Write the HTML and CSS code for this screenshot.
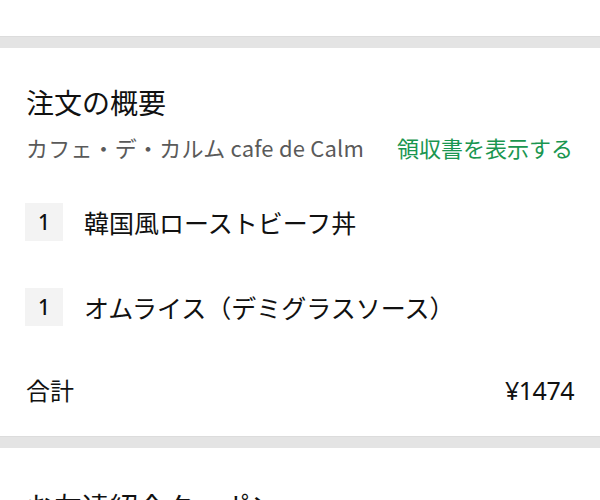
FILE: index.html
```html
<!DOCTYPE html>
<html lang="ja">
<head>
<meta charset="utf-8">
<link rel="stylesheet" href="styles.css">
</head>
<body>
<div class="top"></div>
<div class="sep"></div>
<section class="card">
  <h2 class="title">注文の概要</h2>
  <div class="sub">
    <span class="shop">カフェ・デ・カルム cafe de Calm</span>
    <a class="receipt">領収書を表示する</a>
  </div>
  <ul class="items">
    <li class="item"><span class="qty">1</span><span class="name">韓国風ローストビーフ丼</span></li>
    <li class="item"><span class="qty">1</span><span class="name">オムライス（デミグラスソース）</span></li>
  </ul>
  <div class="total">
    <span>合計</span>
    <span class="amount">¥1474</span>
  </div>
</section>
<div class="sep"></div>
<section class="card next">
  <h2 class="title">お友達紹介クーポン</h2>
</section>
</body>
</html>
```
FILE: styles.css
```css
html, body {
  margin: 0;
  padding: 0;
  background: #fff;
  font-family: "Noto Sans CJK JP", "Noto Sans", sans-serif;
  color: #111;
  overflow: hidden;
}
.top {
  height: 36px;
  background: #fff;
}
.sep {
  height: 12px;
  background: #e4e4e4;
  border-top: 1px solid #dcdcdc;
  box-sizing: border-box;
}
.card {
  padding: 36px 26px 31px 26px;
  background: #fff;
}
.title {
  margin: 0;
  font-size: 28px;
  font-weight: 400;
  line-height: 36px;
  color: #111;
}
.sub {
  margin-top: 12px;
  display: flex;
  justify-content: space-between;
  align-items: center;
  line-height: 30px;
  font-size: 22px;
}
.shop {
  color: #5a5a5a;
  letter-spacing: 0.2px;
}
.receipt {
  color: #1a9650;
  font-size: 22px;
  margin-right: 1px;
}
.items {
  list-style: none;
  margin: 41px 0 0 0;
  padding: 0;
  display: flex;
  flex-direction: column;
  gap: 47px;
}
.item {
  display: flex;
  align-items: center;
  gap: 21px;
}
.qty {
  width: 38px;
  height: 38px;
  background: #f3f3f3;
  display: flex;
  align-items: center;
  justify-content: center;
  font-family: "Noto Sans", sans-serif;
  font-size: 21px;
  font-weight: 500;
  color: #111;
  margin-left: -1px;
}
.name {
  font-size: 25px;
  line-height: 38px;
}
.total {
  margin-top: 49px;
  display: flex;
  justify-content: space-between;
  align-items: center;
  font-size: 24px;
  line-height: 30px;
}
.amount {
  font-family: "Noto Sans", sans-serif;
  font-size: 25px;
  letter-spacing: -0.5px;
}
.next {
  padding-top: 40px;
}
```
